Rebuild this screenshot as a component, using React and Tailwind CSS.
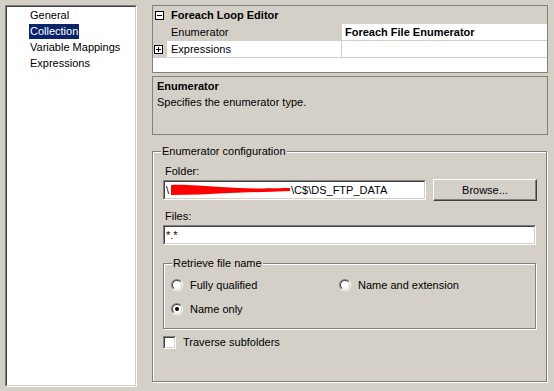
function Sunken({ className = "", inner = "bg-white", children }) {
  return (
    <div className={"border border-t-[#808080] border-l-[#808080] border-r-white border-b-white " + className}>
      <div className={"h-full w-full border border-t-[#404040] border-l-[#404040] border-r-[#d4d0c8] border-b-[#d4d0c8] " + inner}>
        {children}
      </div>
    </div>
  );
}

function Etched({ title, className = "", children }) {
  return (
    <div className={"relative border border-[#808080] shadow-[1px_1px_0_white,inset_1px_1px_0_white] " + className}>
      <span className="absolute -top-[7px] left-[8px] bg-[#d4d0c8] px-[1px] leading-[13px]">{title}</span>
      {children}
    </div>
  );
}

function ExpandBox({ open }) {
  return (
    <div className="relative w-[9px] h-[9px] border border-black bg-white">
      <div className="absolute left-[1px] top-[3px] w-[5px] h-[1px] bg-black" />
      {!open && <div className="absolute left-[3px] top-[1px] w-[1px] h-[5px] bg-black" />}
    </div>
  );
}

function Radio({ checked, label }) {
  return (
    <div className="flex items-center h-[14px]">
      <div className="w-[12px] h-[12px] rounded-full border border-t-[#808080] border-l-[#808080] border-r-white border-b-white">
        <div className="w-full h-full rounded-full border border-t-[#404040] border-l-[#404040] border-r-[#d4d0c8] border-b-[#d4d0c8] bg-white flex items-center justify-center">
          {checked && <div className="w-[4px] h-[4px] rounded-full bg-black" />}
        </div>
      </div>
      <span className="ml-[7px]">{label}</span>
    </div>
  );
}

export default function App() {
  const pages = ["General", "Collection", "Variable Mappings", "Expressions"];

  return (
    <div className="w-[554px] h-[391px] overflow-hidden bg-[#d4d0c8] flex gap-[15px] pl-[5px] pt-[5px] text-black text-[11px] leading-[13px] font-['Liberation_Sans',Arial,sans-serif]">
      {/* page list */}
      <Sunken className="w-[132px] h-[382px] shrink-0">
        {pages.map((p) => (
          <div key={p} className="h-[16px] flex items-center pl-[22px]">
            <span className={p === "Collection" ? "bg-[#0a246a] text-white px-[1px] leading-[15px]" : "px-[1px]"}>{p}</span>
          </div>
        ))}
      </Sunken>

      <div className="w-[396px] flex flex-col">
        {/* property grid */}
        <div className="h-[68px] border border-[#808080] bg-white flex flex-col">
          <div className="h-[18px] bg-[#d4d0c8] flex items-center pl-[2px]">
            <ExpandBox open />
            <span className="ml-[7px] font-bold">Foreach Loop Editor</span>
          </div>
          <div className="h-[17px] flex border-b border-[#d4d0c8]">
            <div className="w-[189px] bg-[#d4d0c8] pl-[18px] flex items-center">Enumerator</div>
            <div className="flex-1 pl-[3px] flex items-center font-bold">Foreach File Enumerator</div>
          </div>
          <div className="h-[17px] flex border-b border-[#d4d0c8]">
            <div className="w-[14px] bg-[#d4d0c8] pl-[1px] flex items-center">
              <ExpandBox />
            </div>
            <div className="w-[175px] pl-[4px] flex items-center border-r border-[#d4d0c8]">Expressions</div>
            <div className="flex-1" />
          </div>
        </div>

        {/* description */}
        <div className="mt-[3px] h-[59px] border border-[#808080] px-[4px] pt-[3px]">
          <div className="font-bold">Enumerator</div>
          <div className="mt-[3px]">Specifies the enumerator type.</div>
        </div>

        {/* enumerator configuration */}
        <Etched title="Enumerator configuration" className="mt-[16px] h-[231px] w-[395px]">
          <div className="pl-[10px] pt-[13px]">
            <div className="pl-[2px]">Folder:</div>
            <div className="mt-[1px] h-[22px] flex items-center gap-[7px]">
              <Sunken className="w-[263px] h-[20px]">
                <div className="h-full flex items-center pl-[1px] whitespace-nowrap">
                  <span>\</span>
                  <svg width="122" height="14" viewBox="0 0 122 14" className="shrink-0">
                    <path d="M2 2 C20 1 40 4 70 5 C90 6 110 5 121 5 L121 8 C100 9 80 9 60 10 C40 11 20 12 2 12 Z" fill="#ff0000" />
                  </svg>
                  <span>\C$\DS_FTP_DATA</span>
                </div>
              </Sunken>
              <div className="w-[104px] h-[22px] border border-t-white border-l-white border-r-[#404040] border-b-[#404040] shadow-[inset_-1px_-1px_0_#808080] flex items-center justify-center">
                Browse...
              </div>
            </div>
            <div className="mt-[9px] pl-[2px]">Files:</div>
            <Sunken className="mt-[2px] w-[373px] h-[20px]">
              <div className="h-full flex items-center pl-[1px]">*.*</div>
            </Sunken>

            <Etched title="Retrieve file name" className="mt-[18px] w-[373px] h-[66px]">
              <div className="pt-[14px] pl-[7px] grid grid-cols-[168px_1fr] gap-y-[10px]">
                <Radio label="Fully qualified" />
                <Radio label="Name and extension" />
                <Radio checked label="Name only" />
              </div>
            </Etched>

            <div className="mt-[7px] flex items-center">
              <Sunken className="w-[13px] h-[13px]" />
              <span className="ml-[7px]">Traverse subfolders</span>
            </div>
          </div>
        </Etched>
      </div>
    </div>
  );
}
